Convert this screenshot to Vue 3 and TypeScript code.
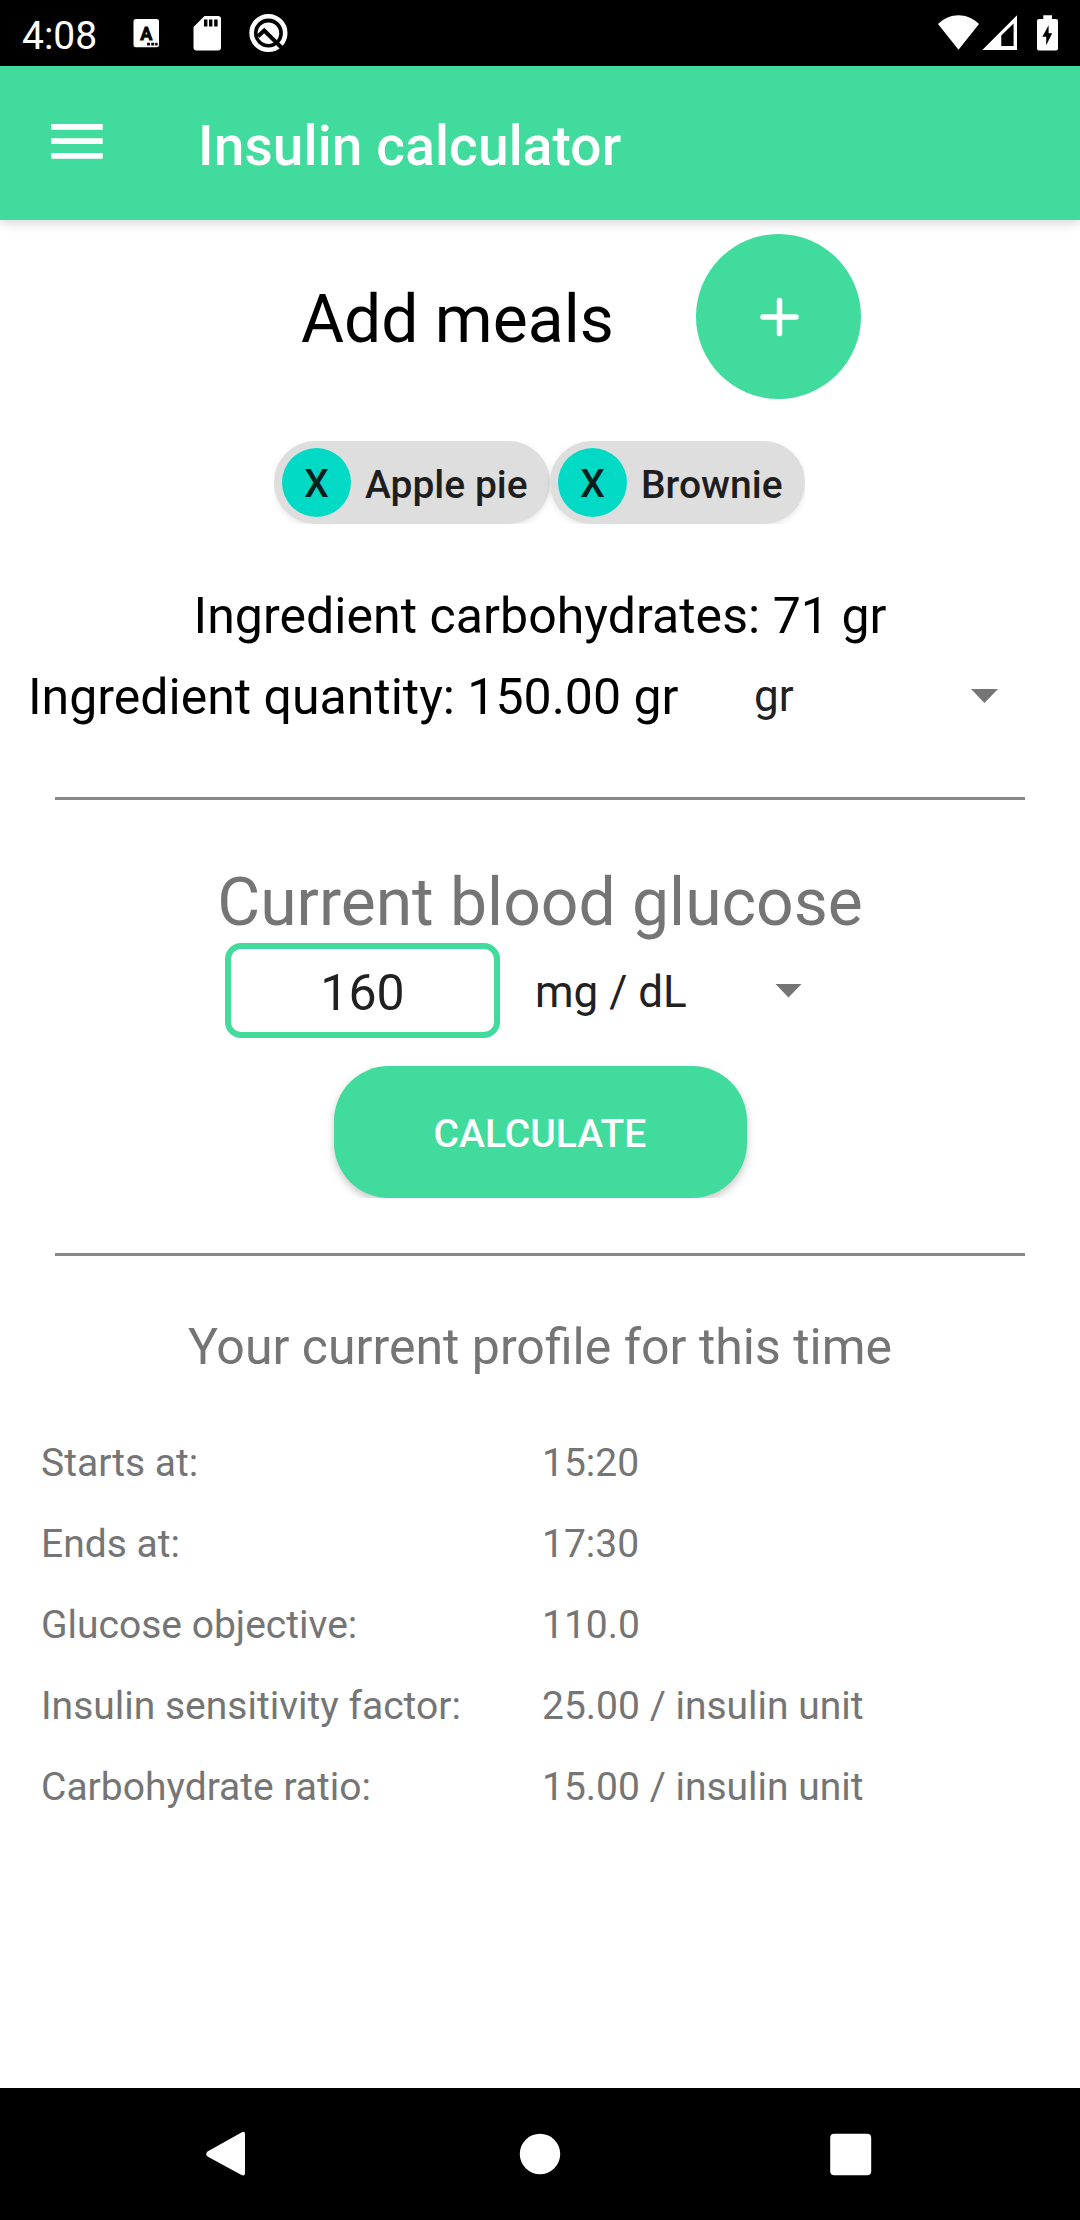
<script setup lang="ts">
import { ref } from 'vue'

interface ProfileRow {
  label: string
  value: string
}

const meals = ref<string[]>(['Apple pie', 'Brownie'])
const glucose = ref('160')

const profile: ProfileRow[] = [
  { label: 'Starts at:', value: '15:20' },
  { label: 'Ends at:', value: '17:30' },
  { label: 'Glucose objective:', value: '110.0' },
  { label: 'Insulin sensitivity factor:', value: '25.00 / insulin unit' },
  { label: 'Carbohydrate ratio:', value: '15.00 / insulin unit' },
]

function removeMeal(index: number): void {
  meals.value.splice(index, 1)
}
</script>

<template>
  <div class="screen">
    <div class="status-bar">
      <span class="clock">4:08</span>
      <svg class="status-left" width="160" height="66" viewBox="130 0 160 66">
        <rect x="133.5" y="19" width="25.5" height="28.3" rx="2.5" fill="#fff" />
        <text x="146.3" y="39.6" text-anchor="middle" class="badge-letter">A</text>
        <path d="M147 42.8h3v2.6h-3zM151.2 42.8h3v2.6h-3zM155.2 42.8h2.4v2.6h-2.4z" fill="#000" />
        <path
          d="M204.5 16H218a3 3 0 0 1 3 3v28.5a3 3 0 0 1-3 3h-21.5a3 3 0 0 1-3-3V27z"
          fill="#fff"
        />
        <path d="M204 19.6h3.4v7H204zM209 19.6h3.4v7H209zM214.2 19.6h3.4v7h-3.4z" fill="#000" />
        <circle cx="268.4" cy="33" r="16.8" fill="none" stroke="#fff" stroke-width="4.6" />
        <circle cx="268.4" cy="33.2" r="10.8" fill="#fff" />
        <path d="M258 36.2l6.2-5.6L283 49" fill="none" stroke="#000" stroke-width="4" />
      </svg>
      <svg class="status-right" width="130" height="66" viewBox="930 0 130 66">
        <path d="M938 24C949.5 12.300 967.500 12.300 979 24L958.500 49.700z" fill="#fff" />
        <path d="M982.300 50L1017 15.300V50zM1001.300 35.500V46H1013.600V23.500z" fill="#fff" fill-rule="evenodd" />
        <path
          d="M1043.300 15.300h8.700v3.700h4a2 2 0 0 1 2 2v27.600a2 2 0 0 1-2 2h-17a2 2 0 0 1-2-2V21a2 2 0 0 1 2-2h4.300z"
          fill="#fff"
        />
        <path d="M1048.600 25.300v8h3.600l-6 12v-8.600h-3.800z" fill="#000" />
      </svg>
    </div>

    <header class="app-bar">
      <svg class="menu-icon" width="52" height="36" viewBox="0 0 52 36">
        <path d="M.3 0h51.400v5.700H.3zM.3 14.300h51.400V20H.3zM.3 29h51.400v5.800H.3z" fill="#fff" />
      </svg>
      <h1 class="app-title">Insulin calculator</h1>
    </header>

    <main class="content">
      <section class="add-row">
        <span class="add-label">Add meals</span>
        <button class="add-button" aria-label="Add meal">
          <svg width="40" height="40" viewBox="0 0 40 40">
            <path d="M20.500 3.500v33M4 20h33" stroke="#fff" stroke-width="5.500" stroke-linecap="round" />
          </svg>
        </button>
      </section>

      <div class="chips">
        <div v-for="(meal, i) in meals" :key="meal" class="chip">
          <span class="chip-remove" @click="removeMeal(i)">X</span>
          <span class="chip-name">{{ meal }}</span>
        </div>
      </div>

      <p class="carbs">Ingredient carbohydrates: 71 gr</p>
      <div class="quantity-row">
        <span class="quantity">Ingredient quantity: 150.00 gr</span>
        <div class="spinner spinner-quantity">
          <span>gr</span>
          <i class="arrow"></i>
        </div>
      </div>

      <hr class="divider divider-top" />

      <h2 class="glucose-title">Current blood glucose</h2>
      <div class="glucose-row">
        <input v-model="glucose" class="glucose-input" type="text" />
        <div class="spinner spinner-glucose">
          <span>mg / dL</span>
          <i class="arrow"></i>
        </div>
      </div>
      <div class="calculate-wrap">
        <button class="calculate">CALCULATE</button>
      </div>

      <hr class="divider divider-bottom" />

      <h3 class="profile-title">Your current profile for this time</h3>
      <dl class="profile">
        <div v-for="row in profile" :key="row.label" class="profile-row">
          <dt>{{ row.label }}</dt>
          <dd>{{ row.value }}</dd>
        </div>
      </dl>
    </main>

    <nav class="nav-bar">
      <svg width="46" height="48" viewBox="0 0 46 48">
        <path d="M1.500 21.500L35 2.700Q39 .5 39 4V43Q39 47 35 44.800L1.500 26.500Q-1 24 1.500 21.500z" fill="#fff" />
      </svg>
      <svg width="46" height="48" viewBox="0 0 46 48"><circle cx="23" cy="24" r="20.200" fill="#fff" /></svg>
      <svg width="46" height="48" viewBox="0 0 46 48"><rect x="2.200" y="3.800" width="41" height="41.500" rx="4" fill="#fff" /></svg>
    </nav>
  </div>
</template>

<style>
body {
  margin: 0;
  background: #fff;
}
</style>

<style scoped>
.screen {
  display: flex;
  flex-direction: column;
  width: 1080px;
  height: 2220px;
  overflow: hidden;
  background: #fff;
  font-family: Roboto, "Noto Sans", sans-serif;
  color: #000;
}

.screen * {
  box-sizing: border-box;
}

h1,
h2,
h3,
p,
dl,
dd {
  margin: 0;
  font-weight: 400;
}

button {
  border: 0;
  padding: 0;
  font-family: inherit;
}

.status-bar {
  display: flex;
  flex: none;
  align-items: center;
  height: 66px;
  padding: 0 20px 0 22px;
  background: #000;
}

.clock {
  width: 108px;
  padding-top: 5px;
  color: #fff;
  font-size: 39px;
  line-height: 46px;
}

.badge-letter {
  font-size: 18px;
  font-weight: 700;
  stroke: #000;
  stroke-width: 0.8px;
}

.status-right {
  margin-left: auto;
}

.app-bar {
  display: flex;
  flex: none;
  align-items: center;
  height: 154px;
  padding-left: 51px;
  background: #41db9d;
  box-shadow: 0 3px 11px rgba(0, 0, 0, 0.16);
}

.menu-icon {
  margin-bottom: 2px;
}

.app-title {
  margin-left: 95px;
  padding-top: 6px;
  color: #fff;
  font-size: 55px;
  font-weight: 500;
  letter-spacing: 0.12px;
  line-height: 66px;
}

.content {
  flex: 1;
}

.add-row {
  display: flex;
  align-items: center;
  height: 165px;
  margin-top: 14px;
  padding-left: 301px;
}

.add-label {
  width: 395px;
  padding-top: 6px;
  font-size: 66px;
  line-height: 78px;
}

.add-button {
  display: flex;
  align-items: center;
  justify-content: center;
  width: 165px;
  height: 165px;
  border-radius: 50%;
  background: #41db9d;
}

.chips {
  display: flex;
  width: 531px;
  height: 83px;
  margin: 42px 0 0 274px;
  overflow: hidden;
}

.chip {
  display: flex;
  flex: none;
  align-items: center;
  height: 83px;
  padding-left: 8px;
  border-radius: 42px;
  background: #dedede;
  box-shadow: 0 2px 6px rgba(0, 0, 0, 0.1);
  font-size: 39px;
  font-weight: 500;
}

.chip:first-child {
  width: 276px;
}

.chip:last-child {
  width: 255px;
}

.chip-remove {
  width: 69px;
  height: 69px;
  padding-top: 2px;
  border-radius: 50%;
  background: #03dac5;
  color: #051f1c;
  line-height: 69px;
  text-align: center;
}

.chip-name {
  margin-left: 14px;
  padding-top: 4px;
  color: #1e1e1e;
  line-height: 46px;
}

.carbs {
  margin-top: 52px;
  font-size: 50px;
  letter-spacing: 0.05px;
  line-height: 81px;
  text-align: center;
}

.quantity-row {
  display: flex;
  align-items: center;
  height: 81px;
  padding-left: 28px;
}

.quantity {
  width: 726px;
  font-size: 50px;
  line-height: 81px;
}

.spinner {
  display: flex;
  align-items: center;
  justify-content: space-between;
  color: #212121;
  font-size: 44px;
  line-height: 54px;
}

.spinner-quantity {
  width: 244px;
  margin-bottom: 3px;
}

.arrow {
  width: 27px;
  height: 14px;
  background: #757575;
  clip-path: polygon(0 0, 100% 0, 50% 100%);
}

.divider {
  width: 970px;
  height: 3px;
  border: 0;
  background: #888;
}

.divider-top {
  margin: 59px 55px 0;
}

.divider-bottom {
  margin: 55px 55px 0;
}

.glucose-title {
  margin-top: 62px;
  color: #757575;
  font-size: 66px;
  line-height: 81px;
  text-align: center;
}

.glucose-row {
  display: flex;
  align-items: center;
  height: 95px;
  padding-left: 225px;
}

.glucose-input {
  width: 275px;
  height: 95px;
  padding: 5px 0 0;
  border: 6px solid #41db9d;
  border-radius: 16px;
  outline: 0;
  background: #fff;
  color: #212121;
  font-family: inherit;
  font-size: 50px;
  text-align: center;
}

.spinner-glucose {
  width: 267px;
  margin-left: 35px;
}

.spinner-glucose span {
  padding-top: 3px;
}

/* The button's elevation is cut off at its own top and bottom edges. */
.calculate-wrap {
  display: flex;
  justify-content: center;
  height: 132px;
  margin-top: 28px;
  overflow: hidden;
}

.calculate {
  width: 413px;
  height: 132px;
  padding-top: 4px;
  border-radius: 55px;
  background: #41db9d;
  box-shadow: 0 4px 8px rgba(0, 0, 0, 0.22);
  color: #fff;
  font-size: 39px;
  font-weight: 500;
}

.profile-title {
  margin-top: 58px;
  color: #757575;
  font-size: 50px;
  line-height: 66px;
  text-align: center;
}

.profile {
  margin-top: 43px;
  color: #757575;
  font-size: 39px;
  line-height: 81px;
}

.profile-row {
  display: flex;
  padding-left: 41px;
}

.profile-row dt {
  width: 501px;
}

.nav-bar {
  display: flex;
  flex: none;
  align-items: center;
  justify-content: space-between;
  height: 132px;
  padding: 0 206px;
  background: #000;
}
</style>
